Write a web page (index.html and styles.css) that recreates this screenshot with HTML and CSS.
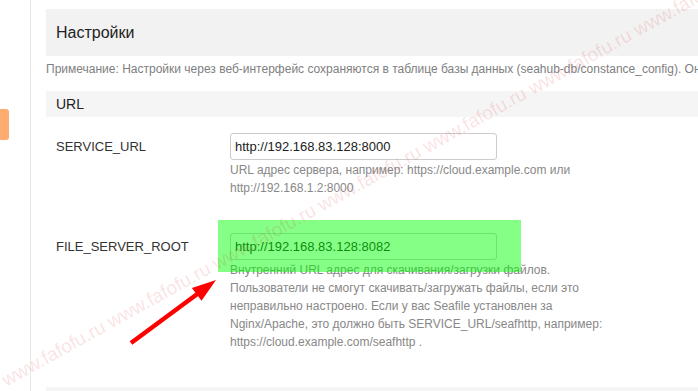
FILE: index.html
```html
<!DOCTYPE html>
<html lang="ru">
    <head>
        <meta charset="UTF-8">
        <title>Настройки</title>
        <link rel="stylesheet" href="styles.css">
    </head>
    <body>
        <div class="layout">
            <!-- Боковая панель -->
            <div class="side">
                <div class="side-active"></div>
            </div>
            <!-- Основная часть -->
            <div class="main">
                <h3 class="page-title">Настройки</h3>
                <p class="note">Примечание: Настройки через веб-интерфейс сохраняются в таблице базы данных (seahub-db/constance_config). Они имеют приоритет над настройками в файлах конфигурации.</p>

                <h4 class="section-title">URL</h4>

                <div class="setting">
                    <div class="setting-name">SERVICE_URL</div>
                    <div class="setting-value">
                        <input type="text" class="setting-input" value="http://192.168.83.128:8000">
                        <p class="setting-help">URL адрес сервера, например: https://cloud.example.com или http://192.168.1.2:8000</p>
                    </div>
                </div>

                <div class="setting">
                    <div class="setting-name">FILE_SERVER_ROOT</div>
                    <div class="setting-value">
                        <input type="text" class="setting-input" value="http://192.168.83.128:8082">
                        <p class="setting-help">Внутренний URL адрес для скачивания/загрузки файлов. Пользователи не смогут скачивать/загружать файлы, если это неправильно настроено. Если у вас Seafile установлен за Nginx/Apache, это должно быть SERVICE_URL/seafhttp, например: https://cloud.example.com/seafhttp .</p>
                    </div>
                </div>

                <h4 class="section-title"></h4>
            </div>
        </div>

        <!-- Пометки поверх скриншота -->
        <div class="mark"></div>
        <svg class="arrow" width="698" height="391" viewBox="0 0 698 391">
            <line x1="131" y1="343" x2="200" y2="292" stroke="#ff0000" stroke-width="4.5" />
            <polygon points="216,280 201.5,300.7 191.9,287.9" fill="#ff0000" />
        </svg>
        <div class="watermark">www.fafofu.ru www.fafofu.ru www.fafofu.ru www.fafofu.ru www.fafofu.ru www.fafofu.ru www.fafofu.ru</div>
    </body>
</html>
```

FILE: styles.css
```css
/* Общие стили */
body, html {
    margin: 0;
    padding: 0;
    height: 100%;
    background-color: #ffffff;
    color: #333333;
    font-family: "Liberation Sans", Arial, sans-serif;
    overflow: hidden;
}

.layout {
    display: flex;
    height: 100vh;
}

/* Боковая панель */
.side {
    width: 30px;
    flex-shrink: 0;
    border-right: 1px solid #e8e8e8;
}

.side-active {
    width: 9px;
    height: 31px;
    margin-top: 109px;
    background-color: #ffab72;
    border-radius: 0 3px 3px 0;
}

/* Основная часть */
.main {
    flex-grow: 1;
    min-width: 0;
    padding: 9px 0 0 15px;
}

.page-title {
    margin: 0;
    height: 47px;
    line-height: 47px;
    padding-left: 10px;
    background-color: #f2f2f2;
    font-size: 16px;
    font-weight: normal;
    color: #222222;
}

.note {
    margin: 5px 0 0;
    font-size: 12px;
    line-height: 17px;
    color: #808080;
    white-space: nowrap;
}

.section-title {
    margin: 13px 0 0;
    height: 26px;
    line-height: 26px;
    padding-left: 10px;
    background-color: #f5f5f5;
    font-size: 14px;
    font-weight: normal;
    color: #222222;
}

/* Строки настроек */
.setting {
    display: flex;
    margin: 16px 0 36px;
}

.setting + .section-title {
    margin-top: 0;
}

.setting-name {
    width: 174px;
    padding-left: 10px;
    font-size: 13px;
    line-height: 27px;
    color: #333333;
}

.setting-value {
    width: 388px;
}

.setting-input {
    display: block;
    box-sizing: border-box;
    width: 267px;
    height: 27px;
    margin: 0;
    padding: 0 4px;
    border: 1px solid #cccccc;
    border-radius: 3px;
    font-family: "Liberation Sans", Arial, sans-serif;
    font-size: 13px;
    color: #222222;
    outline: none;
}

.setting-help {
    margin: 1px 0 0;
    font-size: 12px;
    line-height: 18px;
    color: #888888;
}

/* Пометки */
.mark {
    position: absolute;
    left: 218px;
    top: 220px;
    width: 303px;
    height: 52px;
    background-color: rgba(0, 255, 0, 0.48);
}

.arrow {
    position: absolute;
    left: 0;
    top: 0;
    pointer-events: none;
}

.watermark {
    position: absolute;
    left: -2px;
    top: 372px;
    transform-origin: 0 0;
    transform: rotate(-29deg);
    font-size: 19px;
    color: rgba(215, 40, 40, 0.14);
    white-space: nowrap;
    pointer-events: none;
}
```
